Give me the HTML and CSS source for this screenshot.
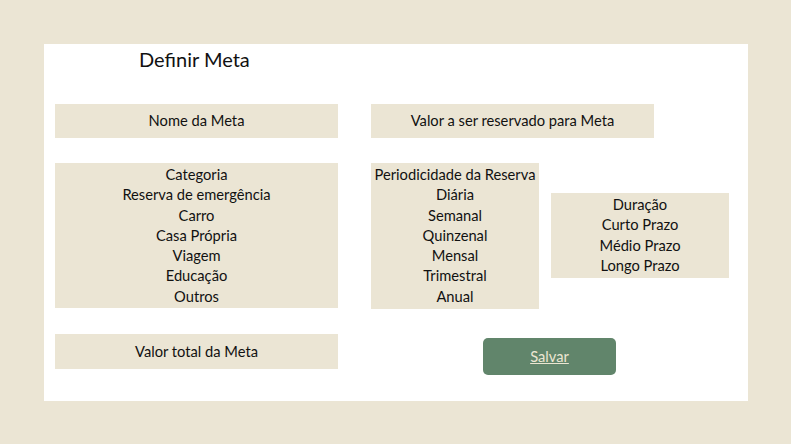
FILE: index.html
```html
<!DOCTYPE html>
<html lang="pt">
<head>
<meta charset="utf-8">
<title>Definir Meta</title>
<link rel="stylesheet" href="styles.css">
</head>
<body>
<main class="panel">
  <h1 class="title">Definir Meta</h1>
  <div class="row row-top">
    <div class="field field-wide">Nome da Meta</div>
    <div class="field field-wide">Valor a ser reservado para Meta</div>
  </div>
  <div class="row row-mid">
    <ul class="list list-cat">
      <li>Categoria</li>
      <li>Reserva de emergência</li>
      <li>Carro</li>
      <li>Casa Própria</li>
      <li>Viagem</li>
      <li>Educação</li>
      <li>Outros</li>
    </ul>
    <ul class="list list-period">
      <li>Periodicidade da Reserva</li>
      <li>Diária</li>
      <li>Semanal</li>
      <li>Quinzenal</li>
      <li>Mensal</li>
      <li>Trimestral</li>
      <li>Anual</li>
    </ul>
    <ul class="list list-dur">
      <li>Duração</li>
      <li>Curto Prazo</li>
      <li>Médio Prazo</li>
      <li>Longo Prazo</li>
    </ul>
  </div>
  <div class="row row-bottom">
    <div class="field field-wide field-total">Valor total da Meta</div>
    <button class="save" type="button"><span>Salvar</span></button>
  </div>
</main>
</body>
</html>
```

FILE: styles.css
```css
* { box-sizing: border-box; }

html, body {
  margin: 0;
  background: #ebe5d4;
}

body {
  padding: 44px 43px 43px 44px;
  font-family: "Lato", "Open Sans", sans-serif;
  color: #111;
}

.panel {
  width: 704px;
  height: 357px;
  background: #ffffff;
  padding: 0 0 0 11px;
}

.title {
  margin: 0;
  padding: 3px 0 0 84px;
  height: 60px;
  font-size: 20px;
  font-weight: 400;
  line-height: 24px;
}

.row {
  display: flex;
  align-items: flex-start;
}

.row-top { gap: 33px; }

.field {
  background: #ebe5d4;
  height: 34px;
  padding-bottom: 2px;
  display: flex;
  align-items: center;
  justify-content: center;
  font-size: 14.7px;
}

.field-wide { width: 283px; }

.row-mid { margin-top: 25px; }

.list {
  list-style: none;
  margin: 0;
  padding: 1px 0 0;
  background: #ebe5d4;
  text-align: center;
  font-size: 14.7px;
  line-height: 20.3px;
}

.list-cat { width: 283px; height: 145px; }
.list-period { width: 168px; height: 146px; margin-left: 33px; }
.list-dur { width: 178px; height: 85px; margin-left: 12px; margin-top: 30px; }

.row-bottom { margin-top: 25px; }

.field-total { height: 35px; }

.save {
  margin: 4px 0 0 145px;
  width: 133px;
  height: 37px;
  border: none;
  border-radius: 5px;
  background: #61856b;
  color: #ece6d2;
  font-family: inherit;
  font-size: 14.7px;
  text-decoration: underline;
  padding: 0 0 2px;
  cursor: pointer;
}
```
